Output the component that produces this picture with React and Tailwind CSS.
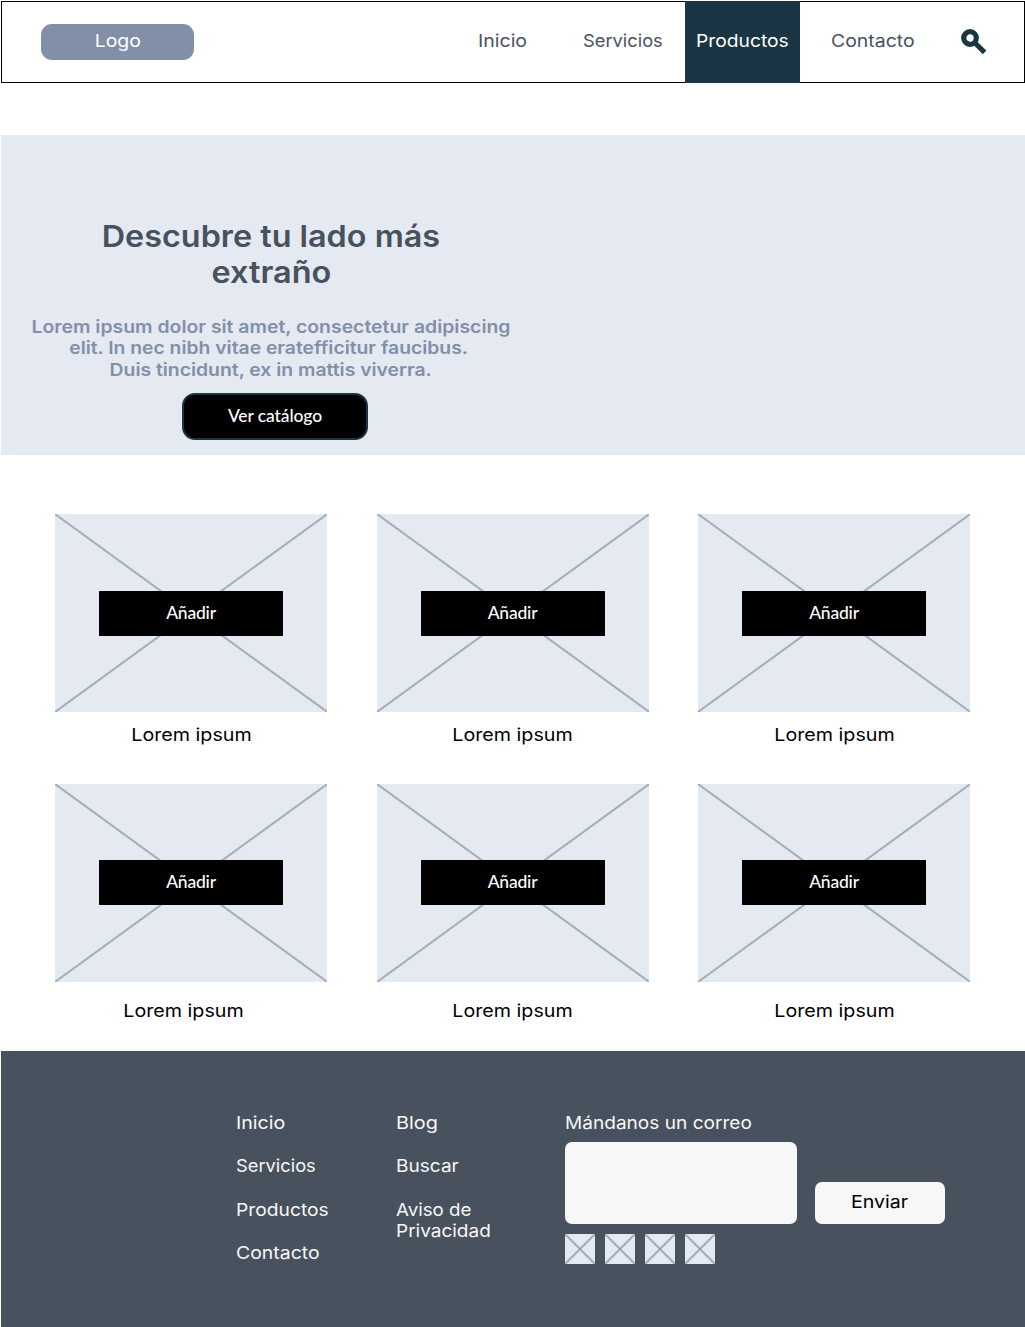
import React from 'react'

function Crossed({ w, h, className, children }) {
  return (
    <div className={`relative bg-[#e4e9f2] ${className}`}>
      <svg viewBox={`0 0 ${w} ${h}`} preserveAspectRatio="none" className="absolute inset-0 h-full w-full">
        <path d={`M0 0L${w} ${h}`} stroke="#8696a0" strokeOpacity="0.7" strokeWidth="2" />
        <path d={`M${w} 0L0 ${h}`} stroke="#8696a0" strokeOpacity="0.7" strokeWidth="2" />
      </svg>
      {children}
    </div>
  )
}

// Widened lettering; "scale" is a Tailwind scale-x class.
function Wide({ scale, className = 'origin-left', children }) {
  return <span className={`inline-block whitespace-nowrap ${scale} ${className}`}>{children}</span>
}

function Card({ caption = '', second = false }) {
  return (
    <div className="w-[272.3px]">
      <Crossed w={272.3} h={198} className="h-[198px]">
        <button
          className={`absolute left-[44px] flex h-[45px] w-[184px] items-center justify-center bg-black font-['Lato',sans-serif] text-[17.5px] font-medium tracking-[-0.2px] text-white ${
            second ? 'top-[76.4px] pb-[2px]' : 'top-[77px] pb-px'
          }`}
        >
          Añadir
        </button>
      </Crossed>
      <p className={`text-center text-black ${second ? 'mt-[18px]' : 'mt-[12px]'} ${caption}`}>
        <Wide scale="scale-x-[1.125]" className="origin-center">
          Lorem ipsum
        </Wide>
      </p>
    </div>
  )
}

export default function App() {
  return (
    <div className="h-[1327px] w-[1025px] overflow-hidden bg-white pt-px pl-px font-['Inter',sans-serif] text-[17.5px] leading-[22px]">
      <header className="flex h-[82px] w-[1024px] items-start border border-black text-[#48525e]">
        <div className="mt-[22px] ml-[39px] flex h-[36px] w-[153px] justify-center rounded-[11px] bg-[#8190a7] pt-[6px] text-white">
          <Wide scale="scale-x-[1.11]" className="origin-center">Logo</Wide>
        </div>
        <nav className="ml-[284px] flex pt-[28px]">
          <a className="w-[104.5px]"><Wide scale="scale-x-[1.115]">Inicio</Wide></a>
          <a className="w-[102px]"><Wide scale="scale-x-[1.045]">Servicios</Wide></a>
          <a className="-mt-[29px] h-[82px] w-[115px] bg-[#1a3543] pt-[29px] pl-[11.5px] text-white">
            <Wide scale="scale-x-[1.1]">Productos</Wide>
          </a>
          <a className="ml-[31.5px] w-[129.5px]"><Wide scale="scale-x-[1.11]">Contacto</Wide></a>
        </nav>
        <svg viewBox="0 0 26 26" className="mt-[27px] h-[26px] w-[26px]" fill="none" stroke="#1a3543">
          <circle cx="9" cy="9" r="6.3" strokeWidth="5.2" />
          <path d="M13 13L23.6 23.4" strokeWidth="5" />
        </svg>
      </header>

      <section className="mt-[52px] h-[320px] w-[1024px] bg-[#e4e9f2] pt-[83px]">
        <div className="flex w-[540px] flex-col items-center text-center">
          <h1 className="text-[30px] leading-[36px] font-semibold text-[#48525e]">
            <Wide scale="scale-x-[1.078]" className="origin-center">Descubre tu lado más</Wide>
            <br />
            <Wide scale="scale-x-[1.083]" className="origin-center">extraño</Wide>
          </h1>
          <p className="mt-[26px] leading-[21.4px] font-semibold text-[#8190a7]">
            <Wide scale="scale-x-[1.109]" className="origin-center">Lorem ipsum dolor sit amet, consectetur adipiscing</Wide>
            <br />
            <Wide scale="scale-x-[1.104]" className="mr-[5px] origin-center">elit. In nec nibh vitae eratefficitur faucibus.</Wide>
            <br />
            <Wide scale="scale-x-[1.106]" className="origin-center">Duis tincidunt, ex in mattis viverra.</Wide>
          </p>
          <button className="mt-[12.8px] ml-[8px] flex h-[47px] w-[186px] items-center justify-center rounded-[13px] border-2 border-[#1a3543] bg-black pb-px font-['Lato',sans-serif] text-[17.5px] font-medium tracking-[-0.1px] text-white">
            Ver catálogo
          </button>
        </div>
      </section>

      <main className="mt-[59px] ml-[54px] w-[915.3px]">
        <div className="flex h-[270px] justify-between">
          <Card />
          <Card />
          <Card />
        </div>
        <div className="flex h-[267px] justify-between">
          <Card second caption="pr-[16px]" />
          <Card second />
          <Card second />
        </div>
      </main>

      <footer className="flex h-[276px] w-[1024px] bg-[#48525e] pt-[61px] pl-[235px] text-[#f7f7f7]">
        <ul className="flex w-[160px] flex-col gap-[21.4px]">
          <li><Wide scale="scale-x-[1.12]">Inicio</Wide></li>
          <li><Wide scale="scale-x-[1.045]">Servicios</Wide></li>
          <li><Wide scale="scale-x-[1.1]">Productos</Wide></li>
          <li><Wide scale="scale-x-[1.11]">Contacto</Wide></li>
        </ul>
        <ul className="flex w-[169px] flex-col gap-[21.4px]">
          <li><Wide scale="scale-x-[1.135]">Blog</Wide></li>
          <li><Wide scale="scale-x-[1.09]">Buscar</Wide></li>
          <li className="leading-[21px]">
            <Wide scale="scale-x-[1.07]">Aviso de</Wide>
            <br />
            <Wide scale="scale-x-[1.085]">Privacidad</Wide>
          </li>
        </ul>
        <div>
          <label className="block"><Wide scale="scale-x-[1.09]">Mándanos un correo</Wide></label>
          <div className="mt-[8px] flex items-end gap-[18px]">
            <div className="h-[82px] w-[232px] rounded-[7px] bg-[#f7f7f7]" />
            <button className="h-[42px] w-[130px] rounded-[7px] bg-[#f7f7f7] pb-[2px] text-black">
              <Wide scale="scale-x-[1.12]" className="origin-center">Enviar</Wide>
            </button>
          </div>
          <div className="mt-[10px] flex gap-[10px]">
            <Crossed w={30} h={30} className="h-[30px] w-[30px]" />
            <Crossed w={30} h={30} className="h-[30px] w-[30px]" />
            <Crossed w={30} h={30} className="h-[30px] w-[30px]" />
            <Crossed w={30} h={30} className="h-[30px] w-[30px]" />
          </div>
        </div>
      </footer>
    </div>
  )
}
